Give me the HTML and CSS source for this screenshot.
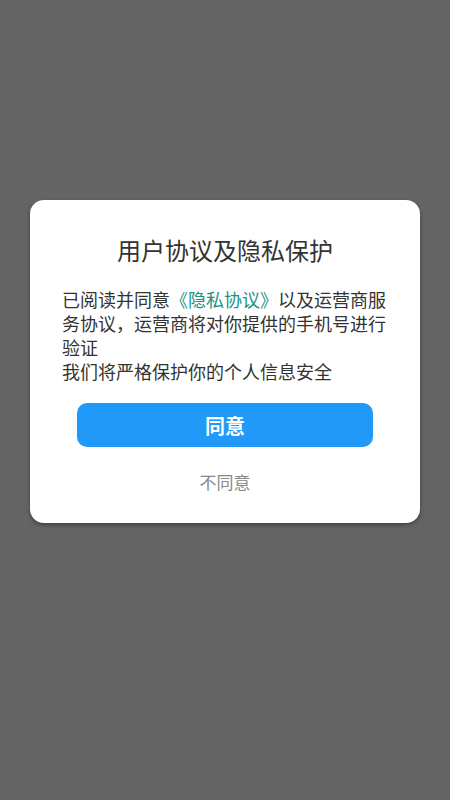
FILE: index.html
```html
<!DOCTYPE html>
<html lang="zh-CN">
<head>
<meta charset="utf-8">
<title>用户协议及隐私保护</title>
<link rel="stylesheet" href="styles.css">
</head>
<body>
<div class="screen">
  <div class="dialog">
    <h1 class="title">用户协议及隐私保护</h1>
    <p class="body">已阅读并同意<span class="link">《隐私协议》</span>以及运营商服务协议，运营商将对你提供的手机号进行验证<br>我们将严格保护你的个人信息安全</p>
    <button class="agree">同意</button>
    <div class="disagree">不同意</div>
  </div>
</div>
</body>
</html>
```
FILE: styles.css
```css
html, body {
  margin: 0;
  padding: 0;
}
body {
  background: #646464;
  font-family: "Noto Sans CJK SC", "Noto Sans", sans-serif;
}
.screen {
  width: 450px;
  height: 800px;
  padding-top: 200px;
  box-sizing: border-box;
}
.dialog {
  margin: 0 30px;
  background: #ffffff;
  border-radius: 14px;
  box-shadow: 0 2px 4px rgba(0, 0, 0, 0.35);
  padding: 34px 32px 29px;
  display: flex;
  flex-direction: column;
}
.title {
  margin: 0;
  font-size: 24px;
  line-height: 32px;
  font-weight: normal;
  color: #333333;
  text-align: center;
}
.body {
  margin: 21px 0 0;
  font-size: 18px;
  line-height: 24px;
  color: #333333;
}
.link {
  color: #1a9383;
}
.agree {
  margin: 20px 15px 0;
  height: 44px;
  border: none;
  border-radius: 10px;
  background: #2199f8;
  color: #ffffff;
  font-family: inherit;
  font-size: 20px;
  font-weight: bold;
  padding: 0;
}
.disagree {
  margin-top: 23px;
  text-align: center;
  font-size: 17px;
  line-height: 24px;
  color: #888888;
}
```
